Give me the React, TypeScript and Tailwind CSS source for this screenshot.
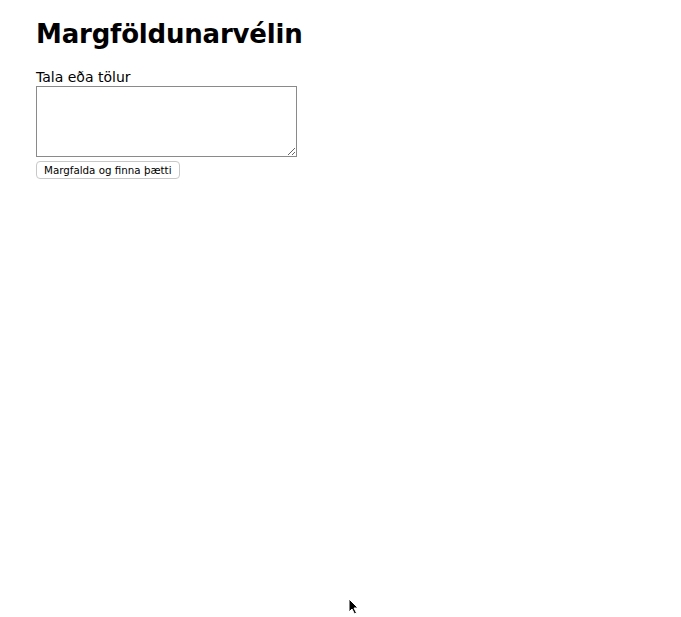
import React from "react";

export default function App() {
  return (
    <div className="relative w-[681px] h-[617px] bg-white text-black" style={{ fontFamily: '"DejaVu Sans", "Noto Sans", sans-serif' }}>
      <div className="pl-[36px] pt-[17px] flex flex-col items-start">
        <h1 className="text-[26px] font-bold leading-[34px] tracking-[-0.2px]">Margföldunarvélin</h1>
        <label className="mt-[18px] text-[14px] leading-[17px]">Tala eða tölur</label>
        <textarea className="block w-[261px] h-[71px] border border-[#8a8a8a] resize-y" />
        <button className="mt-[4px] h-[18px] px-[7px] border border-[#c8c8c8] rounded-[4px] bg-white text-[10.3px] leading-[16px]">Margfalda og finna þætti</button>
      </div>
      <svg className="absolute left-[348px] top-[598px]" width="12" height="17" viewBox="0 0 12 17">
        <path d="M1 1 L1 14 L4 11 L6.5 16 L8.5 15 L6 10 L10 10 Z" fill="black" stroke="white" strokeWidth="1" />
      </svg>
    </div>
  );
}
